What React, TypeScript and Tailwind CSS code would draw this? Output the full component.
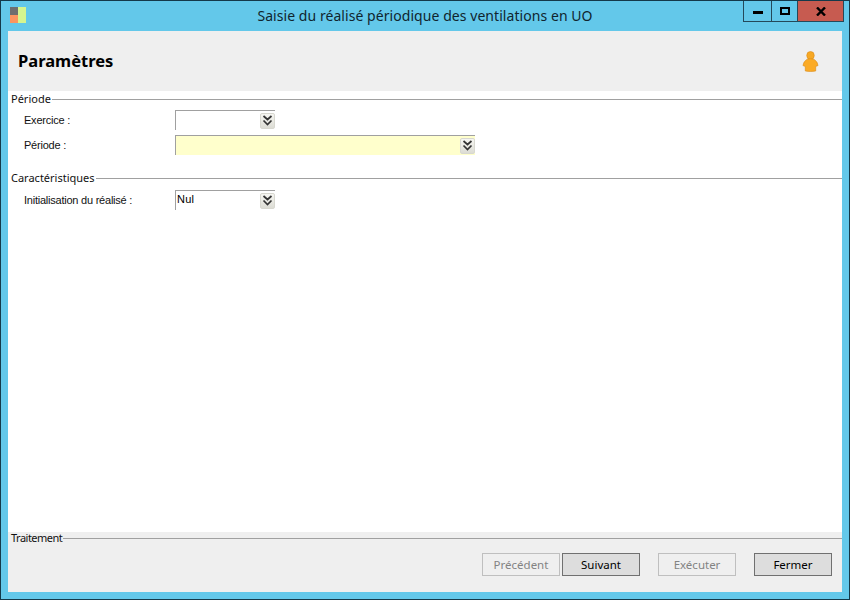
const labelFont = "font-['Liberation_Sans',Arial,sans-serif]"

function Chevrons({ double = true }: { double?: boolean }) {
  return (
    <span
      className={`w-[15px] h-[16px] rounded-[2px] border flex items-center justify-center ${
        double
          ? 'border-[#d8d8d0] bg-gradient-to-b from-[#f6f6f2] to-[#dcdcd4]'
          : 'border-[#dcdcdc] bg-gradient-to-b from-[#f4f4f4] to-[#d4d4d4]'
      }`}
    >
      <svg width="13" height="13" viewBox="0 0 13 13" fill="none" stroke="#333" strokeWidth="1.7">
        {double ? (
          <>
            <path d="M2.5 2 L6.5 5.5 L10.5 2" />
            <path d="M2.5 6.5 L6.5 10.5 L10.5 6.5" />
          </>
        ) : (
          <path d="M2.5 4.5 L6.5 8.5 L10.5 4.5" />
        )}
      </svg>
    </span>
  )
}

function Combo({
  width,
  value,
  yellow,
  double,
}: {
  width: string
  value?: string
  yellow?: boolean
  double?: boolean
}) {
  return (
    <div
      className={`${width} h-[20px] border-t border-l border-[#a0a0a0] flex items-center justify-between ${
        yellow ? 'bg-[#ffffcc]' : 'bg-white'
      }`}
    >
      <span className="pl-[1px] -mt-[2px] text-[11px] text-black font-['Liberation_Sans',Arial,sans-serif] tracking-[0.2px]">
        {value}
      </span>
      <Chevrons double={double} />
    </div>
  )
}

function GroupTitle({ title, tight }: { title: string; tight?: boolean }) {
  return (
    <div className="flex items-center h-[14px] pl-[3px]">
      <span
        className={`text-[11px] leading-[14px] text-[#111] font-['Noto_Sans',sans-serif] pr-[1px] ${
          tight ? 'tracking-[-0.5px]' : ''
        }`}
      >
        {title}
      </span>
      <div className="flex-1 h-[1px] bg-[#a0a0a0]" />
    </div>
  )
}

function Row({ label, children }: { label: string; children: React.ReactNode }) {
  return (
    <div className="flex items-start h-[20px] pl-[16px]">
      <span className={`w-[151px] text-[11px] leading-[21px] tracking-[-0.23px] text-[#111] ${labelFont}`}>{label}</span>
      {children}
    </div>
  )
}

function FooterButton({ label, disabled, className }: { label: string; disabled?: boolean; className?: string }) {
  return (
    <button
      className={`w-[78px] h-[23px] border text-[11.5px] font-['Noto_Sans',sans-serif] ${
        disabled
          ? 'border-[#bfbfbf] bg-[#efefef] text-[#838383]'
          : 'border-[#707070] bg-[#dddddd] text-black'
      } ${className ?? ''}`}
    >
      {label}
    </button>
  )
}

export default function App() {
  return (
    <div className="w-[850px] h-[600px] bg-[#63c8ea] border border-[#14394a] flex flex-col overflow-hidden">
      {/* Title bar */}
      <div className="h-[30px] shrink-0 flex items-start">
        <svg className="ml-[9px] mt-[6px]" width="17" height="17" viewBox="0 0 17 17">
          <rect x="0" y="0" width="8" height="8" fill="#6e6e6e" />
          <rect x="0" y="8" width="8" height="8" fill="#fb9560" />
          <rect x="8" y="0" width="8" height="16" fill="#d6f58f" />
        </svg>
        <div className="flex-1 text-center text-[14px] leading-[30px] tracking-[0.06px] text-[#10252e] font-['Noto_Sans',sans-serif] pl-[80px]">
          Saisie du réalisé périodique des ventilations en UO
        </div>
        <div className="flex items-stretch h-[21px] border border-t-0 border-[#24495a] mr-[5px]">
          <div className="w-[28px] flex items-center justify-center border-r border-[#24495a]">
            <div className="w-[10px] h-[3px] bg-black mt-[3px]" />
          </div>
          <div className="w-[26px] flex items-center justify-center border-r border-[#24495a]">
            <div className="w-[10px] h-[8px] border-2 border-black" />
          </div>
          <div className="w-[45px] flex items-center justify-center bg-[#c75b50]">
            <svg width="10" height="9" viewBox="0 0 10 9" stroke="#000" strokeWidth="2.4" fill="none">
              <path d="M1 0.5 L9 8.5 M9 0.5 L1 8.5" />
            </svg>
          </div>
        </div>
      </div>

      {/* Body */}
      <div className="mx-[7px] w-[834px] h-[561px] bg-white flex flex-col">
        <div className="h-[60px] shrink-0 bg-[#efefef] flex items-center justify-between pl-[10px] pr-[23px]">
          <h1 className="text-[16.5px] font-bold text-black font-['Noto_Sans',sans-serif]">Paramètres</h1>
          <svg width="17" height="21" viewBox="0 0 18 21" preserveAspectRatio="none">
            <circle cx="9" cy="4.5" r="4" fill="#f7a823" stroke="#d98a18" strokeWidth="0.6" />
            <path
              d="M5 8.5 Q9 7 13 8.5 Q16.5 10.5 17 14.5 L14.5 15.5 L14.5 20 Q9 21 3.5 20 L3.5 15.5 L1 14.5 Q1.5 10.5 5 8.5 Z"
              fill="#fbab26"
              stroke="#d98a18"
              strokeWidth="0.6"
            />
          </svg>
        </div>

        <div className="flex-1 flex flex-col pt-[1px]">
          <GroupTitle title="Période" />
          <div className="flex flex-col gap-[5px] pt-[4px]">
            <Row label="Exercice :">
              <Combo width="w-[100px]" double />
            </Row>
            <Row label="Période :">
              <Combo width="w-[300px]" yellow double />
            </Row>
          </div>
          <div className="pt-[16px]">
            <GroupTitle title="Caractéristiques" />
          </div>
          <div className="pt-[5px]">
            <Row label="Initialisation du réalisé :">
              <Combo width="w-[100px]" value="Nul" />
            </Row>
          </div>
        </div>

        <div className="h-[60px] shrink-0 bg-[#efefef] flex flex-col">
          <div className="-mt-[1px]">
            <GroupTitle title="Traitement" tight />
          </div>
          <div className="flex justify-end pr-[10px] pt-[8px]">
            <FooterButton label="Précédent" disabled />
            <FooterButton label="Suivant" className="ml-[2px]" />
            <FooterButton label="Exécuter" disabled className="ml-[18px]" />
            <FooterButton label="Fermer" className="ml-[18px]" />
          </div>
        </div>
      </div>
    </div>
  )
}
